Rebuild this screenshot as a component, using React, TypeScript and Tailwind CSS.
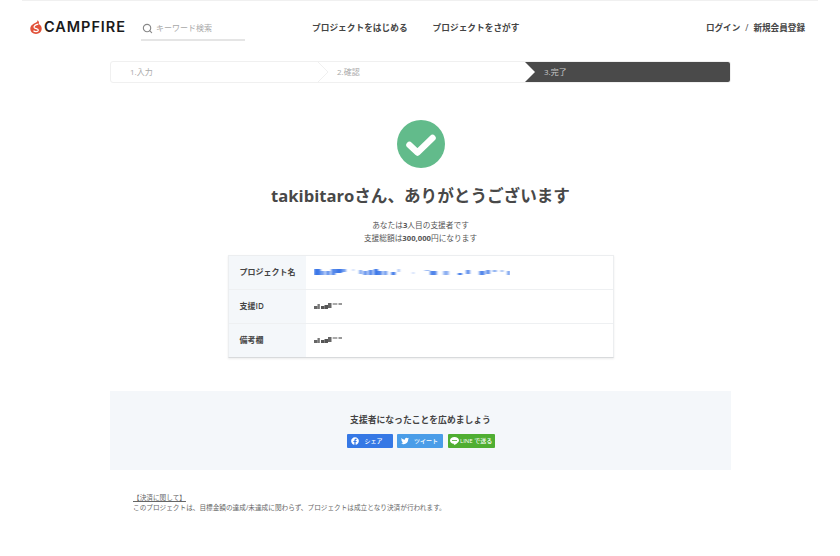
import React from "react";
import { Search } from "lucide-react";
import { FaFacebook, FaTwitter } from "react-icons/fa";

const FONT = "font-['Open_Sans','Noto_Sans_CJK_JP',sans-serif]";

// pixelated, blurred-out values from the screenshot
const Mosaic = ({ width, base, color, cells }: { width: number; base: number; color: string; cells: number[][] }) => (
  <svg width={width} height={8} viewBox={`0 0 ${base} 8`} preserveAspectRatio="none" className="block">
    <filter id={`blur-${width}`}>
      <feGaussianBlur stdDeviation="0.6" />
    </filter>
    <g fill={color} filter={`url(#blur-${width})`}>
      {cells.map(([x, y, w, h, o], i) => (
        <rect key={i} x={x} y={y} width={w} height={h} opacity={o} />
      ))}
    </g>
  </svg>
);

const nameCells = [
  [0, 1, 5, 6, 1], [5, 3, 3, 4, 0.7], [9, 3, 3, 4, 0.8], [13, 1, 3, 6, 0.9], [16, 1, 5, 4, 1], [21, 1, 3, 3, 0.7],
  [29, 1, 1, 2, 0.4], [34, 2, 2, 4, 0.7], [37, 3, 3, 4, 0.8], [41, 2, 3, 5, 0.9], [45, 1, 3, 6, 1], [48, 3, 3, 4, 0.9],
  [52, 3, 3, 4, 0.7], [58, 4, 3, 3, 1], [63, 1, 1, 3, 0.7], [74, 4, 1, 2, 0.4], [83, 2, 4, 1, 0.5], [87, 3, 5, 4, 0.9],
  [97, 3, 4, 4, 0.6], [108, 5, 3, 2, 1], [114, 2, 3, 4, 0.8], [124, 3, 4, 4, 0.9], [129, 2, 3, 4, 0.8], [134, 2, 3, 2, 0.6],
  [140, 2, 2, 2, 0.5], [145, 3, 2, 4, 0.8],
];
const idCells = [
  [0, 4, 3, 3, 0.9], [3, 2, 2, 5, 0.8], [6, 4, 3, 3, 1], [9, 3, 3, 4, 1], [12, 1, 3, 5, 0.9], [16, 1, 4, 2, 0.5], [21, 1, 3, 2, 0.6],
];

const Row = ({ label, last, children }: { label: string; last?: boolean; children: React.ReactNode }) => (
  <div className={`flex ${last ? "h-[33px]" : "h-[34px] border-b border-[#eef0f2]"}`}>
    <div className="flex w-[77px] items-center bg-[#f4f7fa] pb-[2px] pl-[11px] text-[8px] font-semibold text-[#444]">{label}</div>
    <div className="flex flex-1 items-center pb-[2px] pl-[8px]">{children}</div>
  </div>
);

const App = () => {
  return (
    <div className={`${FONT} h-[556px] w-[840px] overflow-hidden bg-white`}>
      <div className="mx-[22px] h-px bg-[#f0f0f0]" />

      <header className="flex h-[60px] items-start pl-[30px] pr-[35px] pt-[17px]">
        <div className="flex h-[18px] w-[111px] items-center">
          <svg width="12" height="14" viewBox="0 0 12 14" className="mr-[2px] shrink-0">
            <path d="M7.4 0C8 1.2 7 2 5.6 2.7 2.8 4 .3 5.6.3 8.8.3 11.8 2.8 14 6 14c3.2 0 5.7-2.2 5.7-5.2 0-2.4-1.4-3.9-3-4.7C9.4 2.8 9 1 7.4 0Z" fill="#e2523a" />
            <path d="M8.3 4.2C5.4 4.6 3.4 6 4.3 7.6 5.2 9 8.6 8.5 8.3 10.4 8 12 4.6 12.2 3.5 10.6" fill="none" stroke="#fff" strokeWidth="1.3" />
          </svg>
          <span className="font-['Inter',sans-serif] text-[14.5px] font-semibold leading-none tracking-[0.95px] text-[#1a1a1a]">CAMPFIRE</span>
        </div>

        <div className="flex h-[23px] w-[104px] items-start border-b-2 border-[#e5e5e5] pt-[4px]">
          <Search size={11} strokeWidth={2.5} className="ml-[1px] mt-[1px] text-[#888]" />
          <span className="ml-[3px] text-[8px] leading-[12px] text-[#a8a8a8]">キーワード検索</span>
        </div>

        <nav className="ml-[67px] flex gap-[25px] pt-[3px] text-[8.7px] font-semibold leading-[14px] text-[#444]">
          <span>プロジェクトをはじめる</span>
          <span>プロジェクトをさがす</span>
        </nav>

        <div className="ml-auto flex gap-[5px] pt-[3px] text-[8.6px] font-semibold leading-[14px] text-[#444]">
          <span>ログイン</span>
          <span className="font-normal">/</span>
          <span>新規会員登録</span>
        </div>
      </header>

      <div className="relative ml-[110px] flex h-[22px] w-[621px] overflow-hidden rounded-[3px] border border-[#f0f0f0] text-[8px] leading-none text-[#aaa]">
        <div className="flex w-[207px] items-center pl-[19px]">1.入力</div>
        <div className="flex w-[206px] items-center pl-[19px]">2.確認</div>
        <div className="flex flex-1 items-center bg-[#4a4a4a] pl-[20px] text-[#c8c8c8]">3.完了</div>
        <svg width="12" height="22" viewBox="0 0 12 22" className="absolute left-[206px] top-[-1px]">
          <path d="M0 0 11 11 0 22" fill="#fff" stroke="#f0f0f0" />
        </svg>
        <svg width="12" height="22" viewBox="0 0 12 22" className="absolute left-[413px] top-[-1px]">
          <path d="M0 0 11 11 0 22Z" fill="#fff" />
        </svg>
      </div>

      <main className="ml-[110px] flex w-[621px] flex-col items-center">
        <svg width="48" height="48" viewBox="0 0 48 48" className="mt-[37px]">
          <circle cx="24" cy="24" r="24" fill="#62bb8b" />
          <path d="M12.5 25 20.5 32.5 35.5 18" fill="none" stroke="#fff" strokeWidth="6.5" strokeLinecap="round" strokeLinejoin="round" />
        </svg>

        <h1 className="mt-[15px] text-[16.6px] font-bold leading-[26px] text-[#484848]">takibitaroさん、ありがとうございます</h1>

        <div className="mt-[10px] text-center text-[7.7px] leading-[13px] text-[#555]">
          <p>あなたは<b>3</b>人目の支援者です</p>
          <p>支援総額は<b>300,000</b>円になります</p>
        </div>

        <div className="mt-[10px] w-[386px] border border-[#eceef0] border-b-[#d8dadc] shadow-[0_1px_2px_rgba(0,0,0,0.08)]">
          <Row label="プロジェクト名"><Mosaic width={196} base={147} color="#3d78e8" cells={nameCells} /></Row>
          <Row label="支援ID"><Mosaic width={28} base={24} color="#555" cells={idCells} /></Row>
          <Row label="備考欄" last><Mosaic width={28} base={24} color="#555" cells={idCells} /></Row>
        </div>

        <section className="mt-[33px] flex h-[79px] w-[621px] flex-col items-center bg-[#f4f7fa] pt-[23px]">
          <h2 className="text-[8.8px] font-bold leading-[13px] text-[#444]">支援者になったことを広めましょう</h2>
          <div className="mt-[7px] flex gap-[4.5px] text-[6px] font-medium leading-none text-white">
            <div className="flex h-[14px] w-[46px] items-center rounded-[1px] bg-[#3578e5] pl-[4px]">
              <FaFacebook size={8} />
              <span className="ml-[6px]">シェア</span>
            </div>
            <div className="flex h-[14px] w-[46px] items-center rounded-[1px] bg-[#4a9de8] pl-[4px]">
              <FaTwitter size={8} />
              <span className="ml-[5px]">ツイート</span>
            </div>
            <div className="flex h-[14px] w-[47px] items-center rounded-[1px] bg-[#4fae32] pl-[2px]">
              <svg width="9" height="8" viewBox="0 0 9 8">
                <path d="M4.5 0C2 0 0 1.5 0 3.4c0 1.7 1.6 3.1 3.7 3.3.3.1.3.3.2.9 0 .3.2.4.6.2C6 7 9 5.2 9 3.4 9 1.5 7 0 4.5 0Z" fill="#fff" />
                <path d="M2 3.5h5" stroke="#4fae32" strokeWidth=".8" />
              </svg>
              <span className="ml-[1.5px] whitespace-nowrap">LINE で送る</span>
            </div>
          </div>
        </section>
      </main>

      <div className="ml-[133px] mt-[23px] text-[6.65px] leading-[10px] text-[#666]">
        <p className="w-[52px] whitespace-nowrap underline">【決済に関して】</p>
        <p>このプロジェクトは、目標金額の達成/未達成に関わらず、プロジェクトは成立となり決済が行われます。</p>
      </div>
    </div>
  );
};

export default App;
